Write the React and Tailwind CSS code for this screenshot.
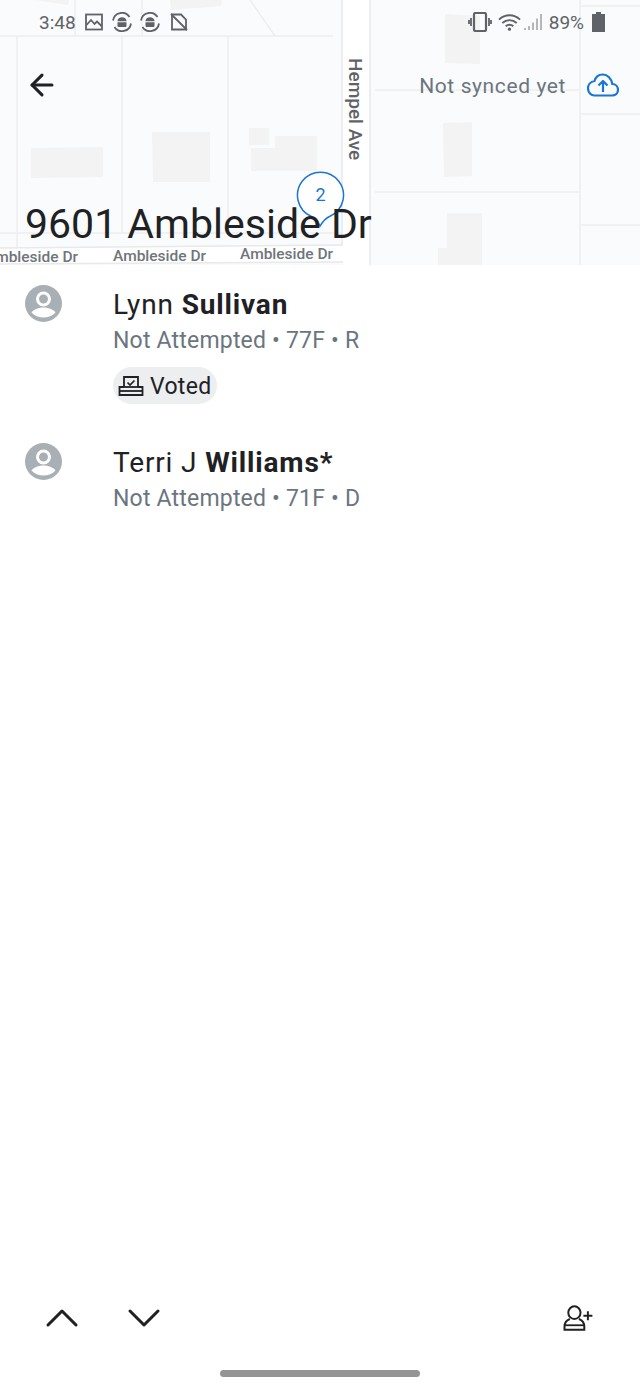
import React from 'react';
import { ArrowLeft, ChevronUp, ChevronDown } from 'lucide-react';

const FONT = "font-['Roboto',sans-serif]";

// map behind the header, everything here is drawn at its place on the map
const MapBackdrop = () => (
  <svg className="absolute inset-0" width="640" height="265" viewBox="0 0 640 265">
    <rect width="640" height="265" fill="#fafbfc" />
    <g fill="none" stroke="#eeeeef" strokeWidth="1.5">
      <path d="M0 36H333" />
      <path d="M17 36V247" />
      <path d="M122 36V233" />
      <path d="M228 36V233" />
      <path d="M75 0V36" />
      <path d="M142 0V36" />
      <path d="M250 0L275 36" />
      <path d="M375 90H579" />
      <path d="M375 192H580" />
      <path d="M580 0V265" />
      <path d="M580 6H640" />
      <path d="M580 114H640" />
      <path d="M581 225H640" />
      <path d="M0 233H343" />
    </g>
    <g fill="#f3f3f3">
      <path d="M31 148L103 147V177L31 178Z" />
      <path d="M152 132H210V182H153Z" />
      <path d="M249 128H269V145H249Z" />
      <path d="M275 136H317V171H251V148H275Z" />
      <path d="M445 14L480 16V64L445 63Z" />
      <path d="M443 123L472 122V176L444 177Z" />
      <path d="M447 213H482V265H438V248H447Z" />
      <path d="M35 0L68 5L69 0Z" />
      <path d="M170 0H222L221 6L171 10Z" />
    </g>
    <rect x="343" y="0" width="27" height="265" fill="#ffffff" />
    <path d="M342 0V247M370 0V265" stroke="#e8e9ea" strokeWidth="1.5" fill="none" />
    <path d="M0 248L343 245V262L0 265Z" fill="#ffffff" />
    <path d="M0 248L343 245M0 264L343 262" stroke="#e8e9ea" strokeWidth="1.5" fill="none" />
  </svg>
);

const AndroidSync = () => (
  <svg width="20" height="20" viewBox="0 0 20 20" fill="none">
    <path d="M1 8.500A9 9 0 0 1 17.500 5" stroke="#5f6368" strokeWidth="1.800" />
    <path d="M19 11.500A9 9 0 0 1 2.500 15" stroke="#5f6368" strokeWidth="1.800" />
    <path d="M5.500 9.200a4.500 4 0 0 1 9 0ZM5.500 10.200h9v3.800a1 1 0 0 1-1 1H6.500a1 1 0 0 1-1-1Z" fill="#5f6368" />
  </svg>
);

const StatusBar = () => (
  <div className="flex items-center justify-between h-[44px] pl-[39px] pr-[35px] text-[#5f6368]">
    <div className="flex items-center">
      <span className="text-[19px] leading-none">3:48</span>
      <svg className="ml-[9px]" width="18" height="18" viewBox="0 0 18 18" fill="none" stroke="#5f6368" strokeWidth="1.800">
        <rect x="1" y="1.500" width="16" height="15" />
        <path d="M1.500 12L6 7l3.500 4L12 8.500 16.500 13" />
      </svg>
      <span className="ml-[9px] flex gap-[8px]">
        <AndroidSync />
        <AndroidSync />
      </span>
      <svg className="ml-[10px]" width="18" height="18" viewBox="0 0 18 18" fill="none" stroke="#5f6368" strokeWidth="1.800">
        <path d="M2 1.500H11L16 6.500V16.500H2Z" />
        <path d="M1 1L17 17" />
      </svg>
    </div>
    <div className="flex items-center">
      <svg width="24" height="20" viewBox="0 0 24 20" fill="none" stroke="#5f6368" strokeWidth="1.800">
        <rect x="6" y="1" width="12" height="18" rx="1.500" strokeWidth="2.200" />
        <path d="M3 6V14M1 8V12M21 6V14M23 8V12" />
      </svg>
      <svg className="ml-[6px]" width="23" height="20" viewBox="0 0 24 20" fill="none" stroke="#5f6368" strokeWidth="2">
        <path d="M1 7.500C7.500 1.500 16.500 1.500 23 7.500" />
        <path d="M4.500 11C9 7 15 7 19.500 11" />
        <path d="M8 14.300C10.500 12.500 13.500 12.500 16 14.300" />
        <circle cx="12" cy="17.500" r="1.700" fill="#5f6368" stroke="none" />
      </svg>
      <svg className="ml-[3px]" width="20" height="18" viewBox="0 0 20 18" fill="#b5b8bb">
        <path d="M0 15h2v2H0zM4 13h2v4H4zM8 9.500h2V17H8zM12 5.500h2V17h-2zM16 1h2v16h-2z" />
      </svg>
      <span className="ml-[5px] text-[19px] leading-none">89%</span>
      <svg className="ml-[8px]" width="13" height="20" viewBox="0 0 13 20" fill="#5f6368">
        <path d="M4 0H9V2H13V20H0V2H4Z" />
      </svg>
    </div>
  </div>
);

const Avatar = () => (
  <svg width="37" height="37" viewBox="0 0 37 37">
    <circle cx="18.500" cy="18.500" r="18.500" fill="#a9b0b5" />
    <circle cx="18.500" cy="14" r="6" fill="none" stroke="#ffffff" strokeWidth="3" />
    <path d="M6.500 27.500C9 24 14 22.500 18.500 22.500S28 24 30.500 27.500C27.500 31 23 32.500 18.500 32.500S9.500 31 6.500 27.500Z" fill="#ffffff" />
  </svg>
);

const BallotIcon = () => (
  <svg width="26" height="24" viewBox="0 0 26 24" fill="none" stroke="#202124" strokeWidth="1.800">
    <path d="M6 13V3H20V13" />
    <path d="M9.500 8.500L12 11L16.500 6.500" strokeWidth="1.700" />
    <path d="M6 13H1.500V21H24.500V13H20" />
    <path d="M1.500 17H24.500" />
    <path d="M4 13H22" />
  </svg>
);

const Voter = ({ first, last, info, voted }) => (
  <div className="flex pl-[25px]">
    <div className="w-[88px] shrink-0">
      <Avatar />
    </div>
    <div className="pt-[2px]">
      <p className="text-[28px] leading-[36px] text-[#202124] tracking-[0.85px]">
        {first} <span className="font-bold">{last}</span>
      </p>
      <p className="mt-[3px] text-[23px] leading-[30px] text-[#6b7580] tracking-[0.2px]">{info}</p>
      {voted && (
        <div className="mt-[11px] inline-flex items-center h-[37px] pl-[5px] pr-[6px] rounded-full bg-[#eceef0] text-[#202124]">
          <BallotIcon />
          <span className="ml-[6px] pt-[3px] text-[23px] tracking-[0.3px]">Voted</span>
        </div>
      )}
    </div>
  </div>
);

export default function App() {
  return (
    <div className={`${FONT} relative w-[640px] h-[1387px] flex flex-col bg-white overflow-hidden`}>
      {/* Map header */}
      <div className="relative h-[265px] shrink-0 overflow-hidden">
        <MapBackdrop />
        <span className="absolute left-[345px] top-[58px] [writing-mode:vertical-rl] text-[19px] font-medium leading-[20px] text-[#5f6368]">Hempel Ave</span>
        <span className="absolute left-[-15px] top-[248px] text-[15.500px] font-medium leading-[18px] text-[#70757a] whitespace-nowrap">Ambleside Dr</span>
        <span className="absolute left-[113px] top-[247px] text-[15.500px] font-medium leading-[18px] text-[#70757a] whitespace-nowrap">Ambleside Dr</span>
        <span className="absolute left-[240px] top-[245px] text-[15.500px] font-medium leading-[18px] text-[#70757a] whitespace-nowrap">Ambleside Dr</span>

        <div className="relative">
          <StatusBar />
          <div className="flex items-center justify-between h-[82px] pl-[25px] pr-[21px]">
            <ArrowLeft size={34} strokeWidth={2.200} className="text-[#202124]" />
            <div className="flex items-center">
              <span className="mt-[3px] text-[21px] tracking-[0.6px] text-[#6b7580]">Not synced yet</span>
              <svg className="ml-[21px]" width="32" height="24" viewBox="0 0 32 24" fill="none" stroke="#1976d2" strokeWidth="2.200" strokeLinejoin="round">
                <path d="M7.500 22.500H25C28.500 22.500 31 20 31 16.800C31 13.500 28.500 11 25.300 11C24.500 5.500 20.500 1.500 15.800 1.500C11.500 1.500 8.500 4.500 7.500 8C3.800 8.500 1 11.500 1 15.200C1 19.500 4 22.500 7.500 22.500Z" />
                <path d="M16 19V8M11.500 12.500L16 8L20.500 12.500" />
              </svg>
            </div>
          </div>
        </div>

        {/* House pin */}
        <svg className="absolute left-[296px] top-[171px]" width="50" height="58" viewBox="0 0 50 58">
          <path d="M15 45.200A23 23 0 1 1 34 45.200C30 47 27 50 24 55C22 50 19 47 15 45.200Z" fill="#ffffff" stroke="#1976d2" strokeWidth="1.500" />
        </svg>
        <span className="absolute left-[296px] top-[184px] w-[49px] text-center text-[18px] leading-[22px] text-[#1976d2]">2</span>

        <h1 className="absolute left-[25px] top-[200px] w-[347px] overflow-hidden whitespace-nowrap text-[41px] leading-[48px] font-normal text-[#202124]">9601 Ambleside Dr</h1>
      </div>

      {/* Voters */}
      <div className="flex flex-col gap-[38px] pt-[20px]">
        <Voter first="Lynn" last="Sullivan" info="Not Attempted • 77F • R" voted />
        <Voter first="Terri J" last="Williams*" info="Not Attempted • 71F • D" />
      </div>

      {/* Bottom actions */}
      <div className="mt-auto flex items-center justify-between h-[68px] pl-[34px] pr-[46px]">
        <div className="flex gap-[26px]">
          <ChevronUp size={56} strokeWidth={1.300} className="text-[#202124]" />
          <ChevronDown size={56} strokeWidth={1.300} className="text-[#202124]" />
        </div>
        <svg width="32" height="27" viewBox="0 0 34 30" fill="none" stroke="#202124" strokeWidth="2.200">
          <ellipse cx="13" cy="8.500" rx="6.800" ry="7" />
          <path d="M8 15.500C4 17 2 20 2 24V27.500H24V24C24 20 22 17 18 15.500" />
          <path d="M2.500 22.500H23.500" strokeWidth="2" />
          <path d="M23 12H33M28 7V17" />
        </svg>
      </div>
      <div className="flex justify-center h-[35px] pt-[18px]">
        <div className="w-[200px] h-[7px] rounded-full bg-[#959595]" />
      </div>
    </div>
  );
}
